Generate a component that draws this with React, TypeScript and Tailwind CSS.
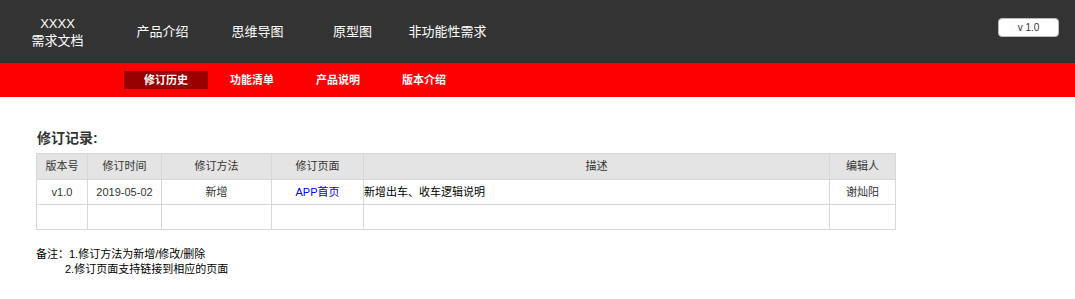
const font = { fontFamily: '"Liberation Sans", Arial, "Noto Sans CJK SC", sans-serif' };

const navItems = ['产品介绍', '思维导图', '原型图', '非功能性需求'];
const subItems = ['修订历史', '功能清单', '产品说明', '版本介绍'];

const cols = [
  { title: '版本号', w: 'w-[51px]' },
  { title: '修订时间', w: 'w-[74px]' },
  { title: '修订方法', w: 'w-[110px]' },
  { title: '修订页面', w: 'w-[92px]' },
  { title: '描述', w: 'w-[466px]' },
  { title: '编辑人', w: 'w-[66px]' },
];

export default function App() {
  return (
    <div className="w-[1075px] h-[299px] bg-white text-[#333333]" style={font}>
      {/* top header */}
      <div className="h-[63px] bg-[#333333] flex items-center text-white text-[13px]">
        <div className="w-[115px] text-center leading-[17px]">
          <div>XXXX</div>
          <div>需求文档</div>
        </div>
        {navItems.map((item) => (
          <div key={item} className="w-[95px] text-center">
            {item}
          </div>
        ))}
        <div className="ml-auto mr-[16px] mb-[8px] w-[61px] h-[19px] bg-white border border-[#bbbbbb] rounded-[4px] flex items-center justify-center text-[10px] text-[#333333]">
          v 1.0
        </div>
      </div>

      {/* sub menu */}
      <div className="h-[34px] bg-[#ff0000] flex gap-[2px] pl-[124px] pt-[8px]">
        {subItems.map((item, i) => (
          <div
            key={item}
            className={`w-[84px] h-[18px] flex items-center justify-center text-white text-[11px] font-bold ${
              i === 0 ? 'bg-[#990000]' : ''
            }`}
          >
            {item}
          </div>
        ))}
      </div>

      {/* content */}
      <div className="pl-[36px] pt-[33px]">
        <div className="text-[14px] font-bold leading-[16px] pl-[1px]">修订记录:</div>
        <table className="mt-[7px] border-collapse text-[11px] table-fixed w-[860px]">
          <thead>
            <tr className="h-[26px] bg-[#e4e4e4]">
              {cols.map((c) => (
                <th key={c.title} className={`${c.w} border border-[#d7d7d7] font-normal text-center text-[#333333]`}>
                  {c.title}
                </th>
              ))}
            </tr>
          </thead>
          <tbody>
            <tr className="h-[25px]">
              <td className="border border-[#d7d7d7] text-center">v1.0</td>
              <td className="border border-[#d7d7d7] text-center">2019-05-02</td>
              <td className="border border-[#d7d7d7] text-center">新增</td>
              <td className="border border-[#d7d7d7] text-center text-[#0000ff]">APP首页</td>
              <td className="border border-[#d7d7d7] text-left text-black">新增出车、收车逻辑说明</td>
              <td className="border border-[#d7d7d7] text-center">谢灿阳</td>
            </tr>
            <tr className="h-[25px]">
              {cols.map((c) => (
                <td key={c.title} className="border border-[#d7d7d7]"></td>
              ))}
            </tr>
          </tbody>
        </table>

        <div className="mt-[17px] text-[11px] leading-[15px] text-black">
          <div>备注：1.修订方法为新增/修改/删除</div>
          <div className="pl-[29px]">2.修订页面支持链接到相应的页面</div>
        </div>
      </div>
    </div>
  );
}
